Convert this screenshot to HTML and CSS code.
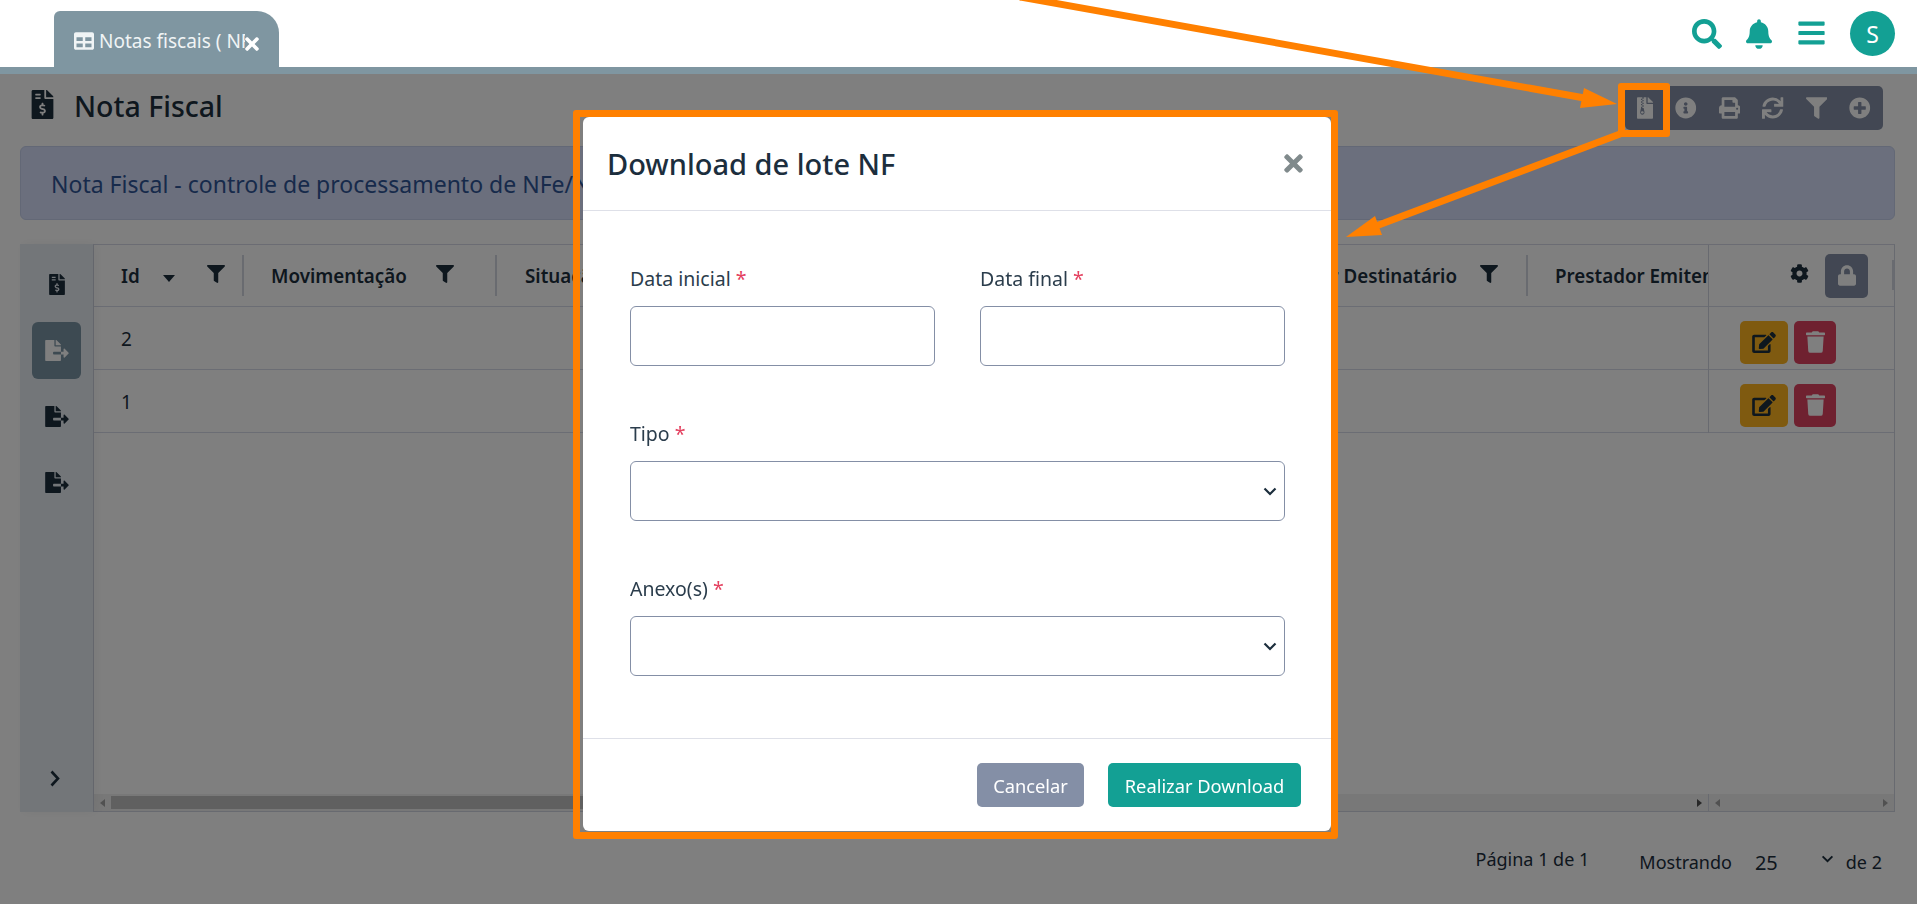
FILE: index.html
```html
<!DOCTYPE html>
<html lang="pt-BR">
<head>
    <meta charset="UTF-8">
    <title>Nota Fiscal</title>
    <link rel="stylesheet" href="styles.css">
</head>
<body>
    <svg class="icon-defs" xmlns="http://www.w3.org/2000/svg">
        <symbol id="i-search" viewBox="0 0 512 512"><path d="M505 442.7L405.3 343c-4.5-4.5-10.6-7-17-7H372c27.6-35.3 44-79.7 44-128C416 93.1 322.9 0 208 0S0 93.1 0 208s93.1 208 208 208c48.3 0 92.7-16.4 128-44v16.3c0 6.4 2.5 12.5 7 17l99.7 99.7c9.4 9.4 24.6 9.4 33.9 0l28.3-28.3c9.4-9.4 9.4-24.6.1-34zM208 336c-70.7 0-128-57.2-128-128 0-70.7 57.2-128 128-128 70.7 0 128 57.2 128 128 0 70.7-57.2 128-128 128z"/></symbol>
        <symbol id="i-bell" viewBox="0 0 448 512"><path d="M224 512c35.32 0 63.97-28.65 63.97-64H160.03c0 35.35 28.65 64 63.97 64zm215.39-149.71c-19.32-20.76-55.47-51.99-55.47-154.29 0-77.7-54.48-139.9-127.94-155.16V32c0-17.67-14.32-32-31.98-32s-31.98 14.33-31.98 32v20.84C118.56 68.1 64.08 130.3 64.08 208c0 102.3-36.15 133.53-55.47 154.29-6 6.45-8.66 14.16-8.61 21.71.11 16.4 12.98 32 32.1 32h383.8c19.12 0 32-15.6 32.1-32 .05-7.55-2.61-15.27-8.61-21.71z"/></symbol>
        <symbol id="i-bars" viewBox="0 0 448 512"><path d="M16 132h416c8.837 0 16-7.163 16-16V76c0-8.837-7.163-16-16-16H16C7.163 60 0 67.163 0 76v40c0 8.837 7.163 16 16 16zm0 160h416c8.837 0 16-7.163 16-16v-40c0-8.837-7.163-16-16-16H16c-8.837 0-16 7.163-16 16v40c0 8.837 7.163 16 16 16zm0 160h416c8.837 0 16-7.163 16-16v-40c0-8.837-7.163-16-16-16H16c-8.837 0-16 7.163-16 16v40c0 8.837 7.163 16 16 16z"/></symbol>
        <symbol id="i-table" viewBox="0 0 512 512"><path d="M464 32H48C21.49 32 0 53.49 0 80v352c0 26.51 21.49 48 48 48h416c26.51 0 48-21.49 48-48V80c0-26.51-21.49-48-48-48zM224 416H64v-96h160v96zm0-160H64v-96h160v96zm224 160H288v-96h160v96zm0-160H288v-96h160v96z"/></symbol>
        <symbol id="i-times" viewBox="0 0 352 512"><path d="M242.72 256l100.07-100.07c12.28-12.28 12.28-32.19 0-44.48l-22.24-22.24c-12.28-12.28-32.19-12.28-44.48 0L176 189.28 75.93 89.21c-12.28-12.28-32.19-12.28-44.48 0L9.21 111.45c-12.28 12.28-12.28 32.19 0 44.48L109.28 256 9.21 356.07c-12.28 12.28-12.28 32.19 0 44.48l22.24 22.24c12.28 12.28 32.2 12.28 44.48 0L176 322.72l100.07 100.07c12.28 12.28 32.2 12.28 44.48 0l22.24-22.24c12.28-12.28 12.28-32.19 0-44.48L242.72 256z"/></symbol>
        <symbol id="i-filter" viewBox="0 0 512 512"><path d="M487.976 0H24.028C2.71 0-8.047 25.866 7.058 40.971L192 225.941V432c0 7.831 3.821 15.17 10.237 19.662l80 55.98C298.02 518.69 320 507.493 320 487.98V225.941l184.947-184.97C520.021 25.896 509.338 0 487.976 0z"/></symbol>
        <symbol id="i-info" viewBox="0 0 512 512"><path d="M256 8C119.043 8 8 119.083 8 256c0 136.997 111.043 248 248 248s248-111.003 248-248C504 119.083 392.957 8 256 8zm0 110c23.196 0 42 18.804 42 42s-18.804 42-42 42-42-18.804-42-42 18.804-42 42-42zm56 254c0 6.627-5.373 12-12 12h-88c-6.627 0-12-5.373-12-12v-24c0-6.627 5.373-12 12-12h12v-64h-12c-6.627 0-12-5.373-12-12v-24c0-6.627 5.373-12 12-12h64c6.627 0 12 5.373 12 12v100h12c6.627 0 12 5.373 12 12v24z"/></symbol>
        <symbol id="i-plus" viewBox="0 0 512 512"><path d="M256 8C119 8 8 119 8 256s111 248 248 248 248-111 248-248S393 8 256 8zm144 276c0 6.6-5.4 12-12 12h-92v92c0 6.6-5.4 12-12 12h-56c-6.6 0-12-5.4-12-12v-92h-92c-6.6 0-12-5.4-12-12v-56c0-6.6 5.4-12 12-12h92v-92c0-6.6 5.4-12 12-12h56c6.6 0 12 5.4 12 12v92h92c6.6 0 12 5.4 12 12v56z"/></symbol>
        <symbol id="i-sync" viewBox="0 0 512 512"><path d="M440.65 12.57l4 82.77A247.16 247.16 0 0 0 255.83 8C134.73 8 33.91 94.92 12.29 209.82A12 12 0 0 0 24.09 224h49.05a12 12 0 0 0 11.67-9.26 175.91 175.91 0 0 1 317-56.94l-101.46-4.86a12 12 0 0 0-12.57 12v47.41a12 12 0 0 0 12 12H500a12 12 0 0 0 12-12V12a12 12 0 0 0-12-12h-47.37a12 12 0 0 0-11.98 12.57zM255.83 432a175.61 175.61 0 0 1-146-77.8l101.8 4.87a12 12 0 0 0 12.57-12v-47.4a12 12 0 0 0-12-12H12a12 12 0 0 0-12 12V500a12 12 0 0 0 12 12h47.35a12 12 0 0 0 12-12.6l-4.15-82.57A247.17 247.17 0 0 0 255.83 504c121.11 0 221.93-86.92 243.55-201.82a12 12 0 0 0-11.8-14.18h-49.05a12 12 0 0 0-11.67 9.26A175.86 175.86 0 0 1 255.83 432z"/></symbol>
        <symbol id="i-print" viewBox="0 0 512 512"><path d="M448 192V77.25c0-8.49-3.37-16.62-9.37-22.63L393.37 9.37c-6-6-14.14-9.37-22.63-9.37H96C78.33 0 64 14.33 64 32v160c-35.35 0-64 28.65-64 64v112c0 8.84 7.16 16 16 16h48v96c0 17.67 14.33 32 32 32h320c17.67 0 32-14.33 32-32v-96h48c8.84 0 16-7.16 16-16V256c0-35.35-28.65-64-64-64zm-64 256H128v-96h256v96zm0-224H128V64h192v48c0 8.84 7.16 16 16 16h48v96zm48 72c-13.25 0-24-10.75-24-24 0-13.26 10.75-24 24-24s24 10.74 24 24c0 13.25-10.75 24-24 24z"/></symbol>
        <symbol id="i-invoice" viewBox="0 0 384 512"><path d="M377 105L279.1 7c-4.5-4.5-10.6-7-17-7H256v128h128v-6.1c0-6.3-2.5-12.4-7-16.9zm-153 31V0H24C10.7 0 0 10.7 0 24v464c0 13.3 10.7 24 24 24h336c13.3 0 24-10.7 24-24V160H248c-13.2 0-24-10.8-24-24zM64 72c0-4.42 3.58-8 8-8h80c4.42 0 8 3.58 8 8v16c0 4.42-3.58 8-8 8H72c-4.42 0-8-3.58-8-8V72zm0 80v-16c0-4.42 3.58-8 8-8h80c4.42 0 8 3.58 8 8v16c0 4.42-3.58 8-8 8H72c-4.42 0-8-3.58-8-8zm144 263.88V440c0 4.42-3.58 8-8 8h-16c-4.42 0-8-3.58-8-8v-24.29c-11.29-.58-22.27-4.52-31.37-11.35-3.9-2.93-4.1-8.77-.57-12.14l11.75-11.21c2.77-2.64 6.89-2.76 10.13-.73 3.87 2.42 8.26 3.72 12.82 3.72h28.11c6.5 0 11.8-5.92 11.8-13.19 0-5.95-3.61-11.19-8.77-12.73l-45-13.5c-18.59-5.58-31.58-23.42-31.58-43.39 0-24.52 19.05-44.44 42.67-45.07V232c0-4.42 3.58-8 8-8h16c4.42 0 8 3.58 8 8v24.29c11.29.58 22.27 4.51 31.37 11.35 3.9 2.93 4.1 8.77.57 12.14l-11.75 11.21c-2.77 2.64-6.89 2.76-10.13.73-3.87-2.43-8.26-3.72-12.82-3.72h-28.11c-6.5 0-11.8 5.92-11.8 13.19 0 5.95 3.61 11.19 8.77 12.73l45 13.5c18.59 5.58 31.58 23.42 31.58 43.39 0 24.53-19.05 44.44-42.67 45.07z"/></symbol>
        <symbol id="i-export" viewBox="0 0 576 512"><path d="M384 121.9c0-6.3-2.5-12.4-7-16.9L279.1 7c-4.5-4.5-10.6-7-17-7H256v128h128zM571 308l-95.7-96.4c-10.1-10.1-27.4-3-27.4 11.3V288h-64v64h64v65.2c0 14.3 17.3 21.4 27.4 11.3L571 332c6.6-6.6 6.6-17.4 0-24zm-379 28v-32c0-8.8 7.2-16 16-16h176V160H248c-13.2 0-24-10.8-24-24V0H24C10.7 0 0 10.7 0 24v464c0 13.3 10.7 24 24 24h336c13.3 0 24-10.7 24-24V352H208c-8.8 0-16-7.2-16-16z"/></symbol>
        <symbol id="i-archive" viewBox="0 0 384 512"><path d="M377 105L279.1 7c-4.5-4.5-10.6-7-17-7H256v128h128v-6.1c0-6.3-2.5-12.4-7-16.9zM128.4 336c-17.9 0-32.4 12.1-32.4 27 0 15 14.6 27 32.5 27s32.4-12.1 32.4-27-14.6-27-32.5-27zM224 136V0h-63.6v32h-32V0H24C10.7 0 0 10.7 0 24v464c0 13.3 10.7 24 24 24h336c13.3 0 24-10.7 24-24V160H248c-13.2 0-24-10.8-24-24zM95.9 32h32v32h-32zm32.3 384c-33.2 0-58-30.4-51.4-62.9L96.4 256v-32h32v-32h-32v-32h32v-32h-32V96h32V64h32v32h-32v32h32v32h-32v32h32v32h-32v32h22.1c5.7 0 10.7 4.1 11.8 9.7l17.3 87.7c6.4 32.4-18.4 62.6-51.4 62.6z"/></symbol>
        <symbol id="i-cog" viewBox="0 0 512 512"><path d="M487.4 315.7l-42.6-24.6c4.3-23.2 4.3-47 0-70.2l42.6-24.6c4.9-2.8 7.1-8.6 5.5-14-11.1-35.6-30-67.8-54.7-94.6-3.8-4.1-10-5.1-14.8-2.3L380.8 110c-17.9-15.4-38.5-27.3-60.8-35.1V25.8c0-5.6-3.9-10.5-9.4-11.7-36.7-8.2-74.3-7.8-109.2 0-5.5 1.2-9.4 6.1-9.4 11.7V75c-22.2 7.9-42.8 19.8-60.8 35.1L88.7 85.5c-4.9-2.8-11-1.9-14.8 2.3-24.7 26.7-43.6 58.9-54.7 94.6-1.7 5.4.6 11.2 5.5 14L67.3 221c-4.3 23.2-4.3 47 0 70.2l-42.6 24.6c-4.9 2.8-7.1 8.6-5.5 14 11.1 35.6 30 67.8 54.7 94.6 3.8 4.1 10 5.1 14.8 2.3l42.6-24.6c17.9 15.4 38.5 27.3 60.8 35.1v49.2c0 5.6 3.9 10.5 9.4 11.7 36.7 8.2 74.3 7.8 109.2 0 5.5-1.2 9.4-6.1 9.4-11.7v-49.2c22.2-7.9 42.8-19.8 60.8-35.1l42.6 24.6c4.9 2.8 11 1.9 14.8-2.3 24.7-26.7 43.6-58.9 54.7-94.6 1.5-5.5-.7-11.3-5.6-14.1zM256 336c-44.1 0-80-35.9-80-80s35.9-80 80-80 80 35.9 80 80-35.9 80-80 80z"/></symbol>
        <symbol id="i-lock" viewBox="0 0 448 512"><path d="M400 224h-24v-72C376 68.2 307.8 0 224 0S72 68.2 72 152v72H48c-26.5 0-48 21.5-48 48v192c0 26.5 21.5 48 48 48h352c26.5 0 48-21.5 48-48V272c0-26.5-21.5-48-48-48zm-104 0H152v-72c0-39.7 32.3-72 72-72s72 32.3 72 72v72z"/></symbol>
        <symbol id="i-edit" viewBox="0 0 576 512"><path d="M402.6 83.2l90.2 90.2c3.8 3.8 3.8 10 0 13.8L274.4 405.6l-92.8 10.3c-12.4 1.4-22.9-9.1-21.5-21.5l10.3-92.8L388.8 83.2c3.8-3.8 10-3.8 13.8 0zm162-22.9l-48.8-48.8c-15.2-15.2-39.9-15.2-55.2 0l-35.4 35.4c-3.8 3.8-3.8 10 0 13.8l90.2 90.2c3.8 3.8 10 3.8 13.8 0l35.4-35.4c15.2-15.3 15.2-40 0-55.2zM384 346.2V448H64V128h229.8c3.2 0 6.2-1.3 8.5-3.5l40-40c7.6-7.6 2.2-20.5-8.5-20.5H48C21.5 64 0 85.5 0 112v352c0 26.5 21.5 48 48 48h352c26.5 0 48-21.5 48-48V306.2c0-10.7-12.9-16-20.5-8.5l-40 40c-2.2 2.3-3.5 5.3-3.5 8.5z"/></symbol>
        <symbol id="i-trash" viewBox="0 0 448 512"><path d="M432 32H312l-9.4-18.7A24 24 0 0 0 281.1 0H166.8a23.72 23.72 0 0 0-21.4 13.3L136 32H16A16 16 0 0 0 0 48v32a16 16 0 0 0 16 16h416a16 16 0 0 0 16-16V48a16 16 0 0 0-16-16zM53.2 467a48 48 0 0 0 47.9 45h245.8a48 48 0 0 0 47.9-45L416 128H32z"/></symbol>
        <symbol id="i-chevron" viewBox="0 0 14 9"><path d="M1.500 1.500L7 7l5.500-5.500" fill="none" stroke="currentColor" stroke-width="2.200"/></symbol>
    </svg>

    <header class="topbar">
        <div class="tab">
            <svg class="tab-icon"><use href="#i-table"/></svg>
            <span class="tab-label">Notas fiscais ( NFe )</span>
            <svg class="tab-close"><use href="#i-times"/></svg>
        </div>
        <div class="topbar-actions">
            <svg class="top-search"><use href="#i-search"/></svg>
            <svg class="top-bell"><use href="#i-bell"/></svg>
            <svg class="top-bars"><use href="#i-bars"/></svg>
            <div class="avatar">S</div>
        </div>
    </header>

    <main class="page">
        <div class="title-row">
            <div class="title">
                <svg class="title-icon"><use href="#i-invoice"/></svg>
                <h1>Nota Fiscal</h1>
            </div>
            <div class="toolbar">
                <svg class="tool-zip"><use href="#i-archive"/></svg>
                <svg class="tool-icon"><use href="#i-info"/></svg>
                <svg class="tool-icon"><use href="#i-print"/></svg>
                <svg class="tool-icon"><use href="#i-sync"/></svg>
                <svg class="tool-icon"><use href="#i-filter"/></svg>
                <svg class="tool-icon"><use href="#i-plus"/></svg>
            </div>
        </div>

        <div class="alert">Nota Fiscal - controle de processamento de NFe/NFSe</div>

        <div class="workspace">
            <nav class="sidebar">
                <div class="side-item"><svg class="side-invoice"><use href="#i-invoice"/></svg></div>
                <div class="side-item active"><svg class="side-export"><use href="#i-export"/></svg></div>
                <div class="side-item"><svg class="side-export"><use href="#i-export"/></svg></div>
                <div class="side-item"><svg class="side-export"><use href="#i-export"/></svg></div>
                <svg class="side-toggle" viewBox="0 0 10 17"><path d="M1.500 1.500L8 8.500l-6.500 7" fill="none" stroke="currentColor" stroke-width="2.600"/></svg>
            </nav>

            <section class="grid">
                <div class="grid-main">
                    <div class="grid-cols">
                        <div class="head-row">
                            <div class="th col-id">
                                <span>Id</span>
                                <span class="caret"></span>
                                <svg class="th-filter"><use href="#i-filter"/></svg>
                            </div>
                            <div class="th col-mov">
                                <span>Movimentação</span>
                                <svg class="th-filter"><use href="#i-filter"/></svg>
                            </div>
                            <div class="th col-sit"><span>Situação</span></div>
                            <div class="th col-dest">
                                <span>Tomador Destinatário</span>
                                <svg class="th-filter"><use href="#i-filter"/></svg>
                            </div>
                            <div class="th col-prest"><span>Prestador Emitente</span></div>
                        </div>
                        <div class="row"><div class="td">2</div></div>
                        <div class="row"><div class="td">1</div></div>
                    </div>
                    <div class="grid-fixed">
                        <div class="fixed-head">
                            <svg class="fixed-cog"><use href="#i-cog"/></svg>
                            <div class="lock-btn"><svg><use href="#i-lock"/></svg></div>
                        </div>
                        <div class="fixed-row">
                            <div class="btn-edit"><svg><use href="#i-edit"/></svg></div>
                            <div class="btn-del"><svg><use href="#i-trash"/></svg></div>
                        </div>
                        <div class="fixed-row">
                            <div class="btn-edit"><svg><use href="#i-edit"/></svg></div>
                            <div class="btn-del"><svg><use href="#i-trash"/></svg></div>
                        </div>
                    </div>
                </div>
                <div class="scroll-bars">
                    <div class="scroll-left">
                        <span class="arrow-left"></span>
                        <div class="scroll-thumb"></div>
                        <span class="arrow-right dark"></span>
                    </div>
                    <div class="scroll-right">
                        <span class="arrow-left"></span>
                        <span class="arrow-right"></span>
                    </div>
                </div>
            </section>
        </div>

        <footer class="pager">
            <span class="pager-pages">Página 1 de 1</span>
            <span class="pager-show">Mostrando</span>
            <span class="pager-size">25</span>
            <svg class="pager-chevron"><use href="#i-chevron"/></svg>
            <span class="pager-total">de 2</span>
        </footer>
    </main>

    <div class="backdrop"></div>

    <div class="modal">
        <div class="modal-header">
            <h2>Download de lote NF</h2>
            <svg class="modal-close"><use href="#i-times"/></svg>
        </div>
        <div class="modal-body">
            <div class="field-pair">
                <div class="field">
                    <label>Data inicial <em>*</em></label>
                    <input type="text" class="control">
                </div>
                <div class="field">
                    <label>Data final <em>*</em></label>
                    <input type="text" class="control">
                </div>
            </div>
            <div class="field">
                <label>Tipo <em>*</em></label>
                <div class="select-wrap">
                    <select class="control"></select>
                    <svg class="select-chevron"><use href="#i-chevron"/></svg>
                </div>
            </div>
            <div class="field">
                <label>Anexo(s) <em>*</em></label>
                <div class="select-wrap">
                    <select class="control"></select>
                    <svg class="select-chevron"><use href="#i-chevron"/></svg>
                </div>
            </div>
        </div>
        <div class="modal-footer">
            <button class="btn btn-cancel">Cancelar</button>
            <button class="btn btn-primary">Realizar Download</button>
        </div>
    </div>

    <!-- marcacoes do tutorial -->
    <div class="mark mark-modal"></div>
    <div class="mark mark-tool"></div>
    <svg class="arrows" viewBox="0 0 1917 904">
        <line x1="1020" y1="-3" x2="1590" y2="99"/>
        <polygon points="1584,88 1617,104 1580,108"/>
        <line x1="1620" y1="134" x2="1376" y2="226"/>
        <polygon points="1375,216 1346,237 1382,235"/>
    </svg>
</body>
</html>
```

FILE: styles.css
```css
* {
    box-sizing: border-box;
}
html, body {
    margin: 0;
    height: 904px;
    overflow: hidden;
}
body {
    font-family: "Noto Sans", "Open Sans", sans-serif;
    font-size: 19px;
    color: #1c2e3d;
    background-color: white;
}
svg {
    fill: currentColor;
    display: block;
}
.icon-defs {
    display: none;
}

/* top bar */
.topbar {
    position: relative;
    z-index: 20;
    height: 74px;
    background-color: white;
    border-bottom: 7px solid #7f96a1;
    display: flex;
    justify-content: space-between;
    padding: 11px 22px 0 54px;
}
.tab {
    width: 225px;
    height: 56px;
    background-color: #7f96a1;
    border-radius: 6px 22px 0 0;
    color: #f0f4f5;
    display: flex;
    align-items: flex-start;
    padding: 20px 0 0 20px;
}
.tab-icon {
    width: 20px;
    height: 20px;
    flex: none;
}
.tab-label {
    width: 146px;
    margin: -3px 0 0 5px;
    overflow: hidden;
    white-space: nowrap;
    font-size: 19px;
}
.tab-close {
    width: 14px;
    height: 20px;
    flex: none;
    color: white;
    margin-top: 3px;
}
.topbar-actions {
    display: flex;
    align-items: flex-start;
    color: #13a094;
}
.top-search {
    width: 30px;
    height: 30px;
    margin-top: 8px;
}
.top-bell {
    width: 26px;
    height: 30px;
    margin: 8px 0 0 24px;
}
.top-bars {
    width: 27px;
    height: 30px;
    margin: 7px 0 0 26px;
}
.avatar {
    width: 45px;
    height: 45px;
    margin-left: 25px;
    border-radius: 50%;
    background-color: #13a094;
    color: white;
    font-size: 23px;
    display: flex;
    align-items: center;
    justify-content: center;
}

/* page */
.page {
    padding: 0 22px 0 20px;
}
.title-row {
    height: 72px;
    display: flex;
    justify-content: space-between;
    padding-right: 12px;
}
.title {
    display: flex;
    align-items: flex-start;
    padding: 16px 0 0 11px;
}
.title-icon {
    width: 23px;
    height: 29px;
}
.title h1 {
    margin: -3px 0 0 20px;
    font-size: 28.500px;
    line-height: 38px;
    font-weight: 500;
}
.toolbar {
    margin-top: 12px;
    width: 258px;
    height: 44px;
    background-color: #848fa6;
    border-radius: 5px;
    color: white;
    display: flex;
    align-items: center;
    padding-left: 12px;
    gap: 22px;
}
.tool-zip {
    width: 16px;
    height: 22px;
}
.tool-icon {
    width: 21.500px;
    height: 22px;
}
.alert {
    height: 74px;
    background-color: #d6defa;
    border: 1px solid #c6d0ec;
    border-radius: 6px;
    color: #2f5596;
    font-size: 23px;
    display: flex;
    align-items: center;
    padding: 2px 0 0 30px;
}

/* grid */
.workspace {
    margin-top: 24px;
    height: 568px;
    display: flex;
}
.sidebar {
    width: 73px;
    flex: none;
    background-color: #e6ecf2;
    box-shadow: 3px 0 10px rgba(0,0,0,0.05);
    padding: 12px 12px 25px;
    display: flex;
    flex-direction: column;
    align-items: center;
    position: relative;
}
.side-item {
    width: 49px;
    height: 57px;
    margin-bottom: 9px;
    border-radius: 6px;
    display: flex;
    align-items: center;
    justify-content: center;
    flex: none;
}
.side-item.active {
    background-color: #7b94a4;
    color: white;
}
.side-invoice {
    width: 16px;
    height: 21px;
}
.side-export {
    width: 24px;
    height: 21px;
}
.side-toggle {
    width: 10px;
    height: 17px;
    margin-top: auto;
    margin-right: 3px;
}
.grid {
    flex: 1;
    min-width: 0;
    border: 1px solid #d0d4e0;
    border-top-color: #d6d9e6;
    display: flex;
    flex-direction: column;
}
.grid-main {
    flex: 1;
    display: flex;
    min-height: 0;
}
.grid-cols {
    flex: 1;
    min-width: 0;
}
.head-row {
    height: 62px;
    display: flex;
    border-bottom: 1px solid #d6dae8;
}
.th {
    display: flex;
    align-items: center;
    font-size: 18.800px;
    font-weight: 600;
    white-space: nowrap;
    position: relative;
    overflow: hidden;
    flex: none;
}
.th-filter {
    width: 18px;
    height: 18px;
    flex: none;
    margin-top: -3px;
}
.col-id {
    width: 150px;
    padding: 0 19px 0 27px;
}
.col-mov {
    width: 253px;
    padding: 0 43px 0 27px;
}
.col-sit {
    flex: 1;
    padding-left: 28px;
}
.col-dest {
    width: 340px;
    justify-content: flex-end;
    padding-right: 30px;
}
.col-prest {
    width: 180px;
    padding-left: 27px;
}
.col-id .th-filter, .col-mov .th-filter {
    margin-left: auto;
}
.col-dest .th-filter {
    margin-left: 23px;
}
/* separadores do cabecalho */
.col-id::after, .col-mov::after, .col-dest::after {
    content: "";
    position: absolute;
    right: 0;
    top: 10px;
    bottom: 10px;
    width: 2px;
    background-color: #d2d6e0;
}
.caret {
    width: 0;
    height: 0;
    margin-left: 23px;
    margin-top: 6px;
    border-left: 6px solid transparent;
    border-right: 6px solid transparent;
    border-top: 7px solid currentColor;
}
.row {
    height: 63px;
    border-bottom: 1px solid #d6dae8;
    display: flex;
    align-items: center;
}
.td {
    padding: 2px 0 0 27px;
}
.grid-fixed {
    width: 186px;
    flex: none;
    align-self: flex-start;
    border-left: 1px solid #d0d4e0;
    position: relative;
}
.fixed-head {
    height: 62px;
    border-bottom: 1px solid #d6dae8;
    display: flex;
    align-items: center;
    padding-left: 81px;
    position: relative;
}
.fixed-head::after {
    content: "";
    position: absolute;
    right: 0;
    top: 15px;
    width: 2px;
    height: 30px;
    background-color: #d2d6e0;
}
.fixed-cog {
    width: 19px;
    height: 19px;
    margin-top: -4px;
}
.lock-btn {
    width: 43px;
    height: 44px;
    margin-left: 16px;
    border-radius: 5px;
    background-color: #848fa6;
    color: white;
    display: flex;
    align-items: center;
    justify-content: center;
}
.lock-btn svg {
    width: 18px;
    height: 21px;
}
.fixed-row {
    height: 63px;
    border-bottom: 1px solid #d6dae8;
    display: flex;
    align-items: center;
    padding: 8px 0 0 31px;
    gap: 6px;
}
.btn-edit, .btn-del {
    height: 43px;
    border-radius: 5px;
    display: flex;
    align-items: center;
    justify-content: center;
}
.btn-edit {
    width: 48px;
    background-color: #feb421;
}
.btn-edit svg {
    width: 24px;
    height: 21px;
}
.btn-del {
    width: 42px;
    background-color: #de4261;
    color: white;
}
.btn-del svg {
    width: 19px;
    height: 22px;
}
.scroll-bars {
    height: 17px;
    flex: none;
    background-color: #f0f0f0;
    display: flex;
}
.scroll-left {
    flex: 1;
    display: flex;
    align-items: center;
    padding: 0 6px 0 6px;
    border-right: 1px solid #d0d4e0;
}
.scroll-right {
    width: 185px;
    flex: none;
    display: flex;
    align-items: center;
    justify-content: space-between;
    padding: 0 6px;
}
.scroll-thumb {
    width: 700px;
    height: 13px;
    margin-left: 6px;
    background-color: #c1c1c1;
}
.arrow-left, .arrow-right {
    width: 0;
    height: 0;
    border-top: 4px solid transparent;
    border-bottom: 4px solid transparent;
}
.arrow-left {
    border-right: 5px solid #a3a3a3;
}
.arrow-right {
    border-left: 5px solid #a3a3a3;
}
.arrow-right.dark {
    border-left-color: #505050;
    margin-left: auto;
}
.pager {
    height: 92px;
    display: flex;
    align-items: center;
    justify-content: flex-end;
    padding: 8px 13px 0 0;
    font-size: 18px;
}
.pager-pages {
    margin-top: -6px;
}
.pager-show {
    margin-left: 50px;
}
.pager-size {
    margin-left: 23px;
    font-size: 20px;
}
.pager-chevron {
    width: 13px;
    height: 8px;
    margin: -6px 0 0 43px;
}
.pager-total {
    margin-left: 12px;
}

/* modal */
.backdrop {
    position: fixed;
    left: 0;
    right: 0;
    top: 74px;
    bottom: 0;
    z-index: 10;
    background-color: rgba(0,0,0,0.5);
}
.modal {
    position: fixed;
    z-index: 11;
    left: 583px;
    top: 117px;
    width: 748px;
    height: 714px;
    background-color: white;
    border-radius: 6px;
    display: flex;
    flex-direction: column;
}
.modal-header {
    height: 94px;
    flex: none;
    border-bottom: 1px solid #dee0e8;
    display: flex;
    align-items: center;
    justify-content: space-between;
    padding: 0 28px 0 24px;
}
.modal-header h2 {
    margin: 0;
    font-size: 29px;
    font-weight: 500;
}
.modal-close {
    width: 19px;
    height: 27px;
    color: #808a8c;
}
.modal-body {
    flex: 1;
    padding: 56px 46px 0 47px;
    display: flex;
    flex-direction: column;
    gap: 56px;
}
.field-pair {
    display: grid;
    grid-template-columns: 305px 305px;
    gap: 45px;
}
.field label {
    display: block;
    font-size: 19.500px;
    line-height: 24px;
    margin-bottom: 15px;
    color: #2b3d4c;
}
.field em {
    font-style: normal;
    color: #e4405f;
}
.control {
    display: block;
    width: 100%;
    height: 60px;
    background-color: white;
    border: 1px solid #848fa6;
    border-radius: 6px;
    appearance: none;
}
.select-wrap {
    position: relative;
}
.select-chevron {
    position: absolute;
    right: 8px;
    top: 26px;
    width: 14px;
    height: 9px;
}
.modal-footer {
    height: 93px;
    flex: none;
    border-top: 1px solid #dee0e8;
    display: flex;
    align-items: center;
    justify-content: flex-end;
    padding-right: 30px;
    gap: 24px;
}
.btn {
    height: 44px;
    border: none;
    border-radius: 5px;
    color: white;
    font-family: inherit;
    font-size: 18.300px;
}
.btn-cancel {
    width: 107px;
    background-color: #848fa6;
}
.btn-primary {
    width: 193px;
    background-color: #13a094;
}

/* tutorial marks */
.mark {
    position: fixed;
    z-index: 30;
    border: 7px solid #ff8000;
    border-radius: 3px;
}
.mark-modal {
    left: 573px;
    top: 110px;
    width: 765px;
    height: 729px;
}
.mark-tool {
    left: 1618px;
    top: 83px;
    width: 52px;
    height: 54px;
}
.arrows {
    position: fixed;
    z-index: 31;
    left: 0;
    top: 0;
    width: 1917px;
    height: 904px;
    fill: #ff8000;
    stroke: none;
}
.arrows line {
    stroke: #ff8000;
    stroke-width: 7;
}
```
